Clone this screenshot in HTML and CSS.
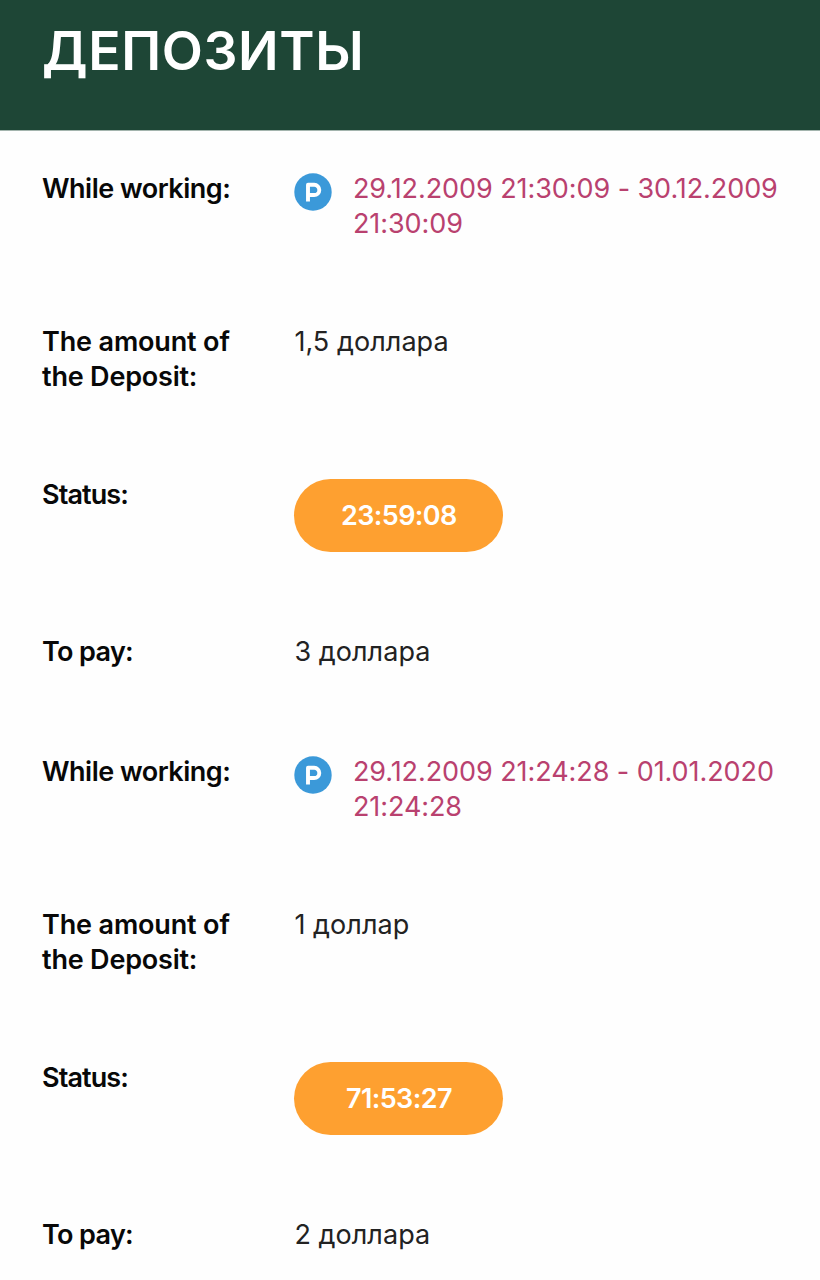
FILE: index.html
```html
<!DOCTYPE html>
<html lang="ru">
<head>
<meta charset="utf-8">
<title>Депозиты</title>
<link rel="stylesheet" href="styles.css">
</head>
<body>
<header class="header"><h1 class="title">ДЕПОЗИТЫ</h1></header>
<main class="list">
  <section class="deposit">
    <div class="row">
      <div class="label label-working">While working:</div>
      <div class="value period"><svg class="coin" viewBox="0 0 38 38" aria-hidden="true"><circle cx="19" cy="19" r="18.7" fill="#3b99d9"/><path d="M14 28.4V11.8h6.2a5.1 5.1 0 0 1 0 10.2H14" fill="none" stroke="#fff" stroke-width="3.9" stroke-linejoin="round"/></svg><div class="dates">29.12.2009 21:30:09 - 30.12.2009<br>21:30:09</div></div>
    </div>
    <div class="row">
      <div class="label"><span class="label-amount">The amount of</span><br><span class="label-deposit">the Deposit:</span></div>
      <div class="value">1,5 доллара</div>
    </div>
    <div class="row">
      <div class="label">Status:</div>
      <div class="value"><span class="pill">23:59:08</span></div>
    </div>
    <div class="row row-pay">
      <div class="label label-pay">To pay:</div>
      <div class="value">3 доллара</div>
    </div>
  </section>
  <section class="deposit">
    <div class="row">
      <div class="label label-working">While working:</div>
      <div class="value period"><svg class="coin" viewBox="0 0 38 38" aria-hidden="true"><circle cx="19" cy="19" r="18.7" fill="#3b99d9"/><path d="M14 28.4V11.8h6.2a5.1 5.1 0 0 1 0 10.2H14" fill="none" stroke="#fff" stroke-width="3.9" stroke-linejoin="round"/></svg><div class="dates">29.12.2009 21:24:28 - 01.01.2020<br>21:24:28</div></div>
    </div>
    <div class="row">
      <div class="label"><span class="label-amount">The amount of</span><br><span class="label-deposit">the Deposit:</span></div>
      <div class="value">1 доллар</div>
    </div>
    <div class="row">
      <div class="label">Status:</div>
      <div class="value"><span class="pill">71:53:27</span></div>
    </div>
    <div class="row row-pay">
      <div class="label label-pay">To pay:</div>
      <div class="value">2 доллара</div>
    </div>
  </section>
</main>
</body>
</html>
```
FILE: styles.css
```css
* { box-sizing: border-box; }
body { margin: 0; height: 1280px; overflow: hidden; background: #fefefe; font-family: Inter, "Open Sans", sans-serif; font-size: 27px; line-height: 35px; color: #222; }
.header { height: 130px; padding: 16px 42px 0; background: #1e4636; box-shadow: 0 1px 0 #a3b4ad; }
.title { margin: 0; color: #fff; font-size: 53.5px; line-height: 70px; font-weight: 600; white-space: nowrap; letter-spacing: 0.6px; }
.list { padding: 41px 0 0 42px; }
.row { display: grid; grid-template-columns: 252.4px 1fr; padding-bottom: 83px; white-space: nowrap; }
.row-pay { padding-bottom: 85px; }
.label { color: #080808; font-weight: 600; letter-spacing: -0.9px; }
.label-working { letter-spacing: -0.5px; }
.label-amount { letter-spacing: -0.15px; }
.label-deposit { letter-spacing: -0.2px; }
.label-pay { letter-spacing: -0.65px; }
.value { letter-spacing: 0.05px; }
.period { display: flex; gap: 20.5px; }
.coin { width: 38px; height: 38px; margin-top: 1.5px; flex: none; }
.dates { color: #b9416f; letter-spacing: -0.07px; }
.pill { display: flex; align-items: center; justify-content: center; width: 209px; height: 73px; margin: 2px 0 -1px; border-radius: 37px; background: #fea030; color: #fff; font-weight: 600; letter-spacing: -0.6px; }
```
